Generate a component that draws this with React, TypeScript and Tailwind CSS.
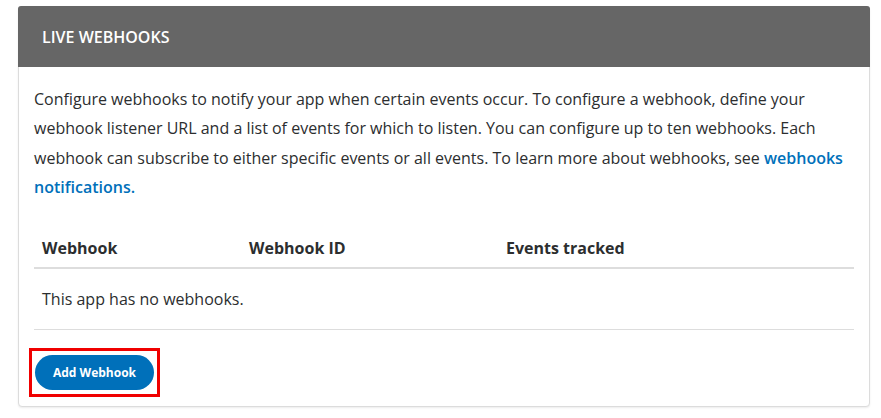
export default function App() {
  return (
    <div className="w-[881px] h-[418px] bg-white pt-[6px] pl-[18px]" style={{ fontFamily: '"Open Sans", sans-serif' }}>
      <div className="w-[852px] h-[401px] border border-[#dcdcdc] rounded-[4px] shadow-[0_1px_2px_rgba(0,0,0,0.08)] bg-white flex flex-col">
        <div className="h-[61px] bg-[#666666] rounded-t-[3px] flex items-center pl-[24px] -mx-px -mt-px">
          <span className="text-white text-[16px] font-semibold">LIVE WEBHOOKS</span>
        </div>
        <div className="px-[15px] pt-[18px]">
          <p className="text-[16px] leading-[29.33px] text-[#2c2e2f] font-normal">
            Configure webhooks to notify your app when certain events occur. To configure a webhook, define your webhook listener URL and a list of events for which to listen. You can configure up to ten webhooks. Each webhook can subscribe to either specific events or all events. To learn more about webhooks, see{" "}
            <a className="text-[#0070ba] font-semibold">webhooks notifications.</a>
          </p>
          <div className="mt-[26px] w-[820px]">
            <div className="grid grid-cols-[207px_257px_1fr] h-[41px] items-center border-b-2 border-[#dddddd] text-[16px] font-bold text-[#2c2e2f]">
              <div className="pl-[8px]">Webhook</div>
              <div className="pl-[8px]">Webhook ID</div>
              <div className="pl-[8px]">Events tracked</div>
            </div>
            <div className="h-[61px] flex items-center pl-[8px] border-b border-[#dddddd] text-[16px] text-[#2c2e2f]">
              This app has no webhooks.
            </div>
          </div>
          <div className="mt-[18px] -ml-[5px] w-[131px] h-[49px] border-[3px] border-[#f00000] flex items-center justify-center">
            <button className="w-[119px] h-[35px] rounded-full bg-[#0070ba] text-white text-[12px] font-bold">
              Add Webhook
            </button>
          </div>
        </div>
      </div>
    </div>
  );
}
